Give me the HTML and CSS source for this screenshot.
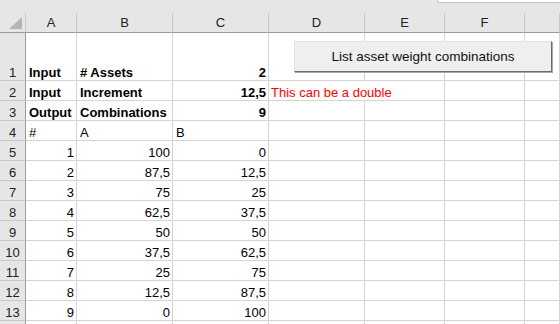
FILE: index.html
```html
<!DOCTYPE html>
<html lang="en">
<head>
    <meta charset="UTF-8">
    <title>Asset weight combinations</title>
    <link rel="stylesheet" href="styles.css">
</head>
<body>
    <div class="workbook">
        <div class="topbar">
            <div class="formula-edge"></div>
        </div>

        <div class="sheet">
            <!-- column headers -->
            <div class="ch corner">
                <svg width="13" height="12" viewBox="0 0 13 12"><polygon points="13,0 13,12 0,12" fill="#b5b5b5"/></svg>
            </div>
            <div class="ch">A</div>
            <div class="ch">B</div>
            <div class="ch">C</div>
            <div class="ch">D</div>
            <div class="ch">E</div>
            <div class="ch">F</div>
            <div class="ch"></div>

            <!-- row 1 -->
            <div class="rh">1</div>
            <div class="c b">Input</div>
            <div class="c b"># Assets</div>
            <div class="c b num">2</div>
            <div class="c"></div><div class="c"></div><div class="c"></div><div class="c"></div>

            <!-- row 2 -->
            <div class="rh">2</div>
            <div class="c b">Input</div>
            <div class="c b">Increment</div>
            <div class="c b num">12,5</div>
            <div class="c note">This can be a double</div>
            <div class="c"></div><div class="c"></div>

            <!-- row 3 -->
            <div class="rh">3</div>
            <div class="c b">Output</div>
            <div class="c b">Combinations</div>
            <div class="c b num">9</div>
            <div class="c"></div><div class="c"></div><div class="c"></div><div class="c"></div>

            <!-- row 4 -->
            <div class="rh">4</div>
            <div class="c">#</div>
            <div class="c">A</div>
            <div class="c">B</div>
            <div class="c"></div><div class="c"></div><div class="c"></div><div class="c"></div>

            <div class="rh">5</div>
            <div class="c num">1</div><div class="c num">100</div><div class="c num">0</div>
            <div class="c"></div><div class="c"></div><div class="c"></div><div class="c"></div>

            <div class="rh">6</div>
            <div class="c num">2</div><div class="c num">87,5</div><div class="c num">12,5</div>
            <div class="c"></div><div class="c"></div><div class="c"></div><div class="c"></div>

            <div class="rh">7</div>
            <div class="c num">3</div><div class="c num">75</div><div class="c num">25</div>
            <div class="c"></div><div class="c"></div><div class="c"></div><div class="c"></div>

            <div class="rh">8</div>
            <div class="c num">4</div><div class="c num">62,5</div><div class="c num">37,5</div>
            <div class="c"></div><div class="c"></div><div class="c"></div><div class="c"></div>

            <div class="rh">9</div>
            <div class="c num">5</div><div class="c num">50</div><div class="c num">50</div>
            <div class="c"></div><div class="c"></div><div class="c"></div><div class="c"></div>

            <div class="rh">10</div>
            <div class="c num">6</div><div class="c num">37,5</div><div class="c num">62,5</div>
            <div class="c"></div><div class="c"></div><div class="c"></div><div class="c"></div>

            <div class="rh">11</div>
            <div class="c num">7</div><div class="c num">25</div><div class="c num">75</div>
            <div class="c"></div><div class="c"></div><div class="c"></div><div class="c"></div>

            <div class="rh">12</div>
            <div class="c num">8</div><div class="c num">12,5</div><div class="c num">87,5</div>
            <div class="c"></div><div class="c"></div><div class="c"></div><div class="c"></div>

            <div class="rh">13</div>
            <div class="c num">9</div><div class="c num">0</div><div class="c num">100</div>
            <div class="c"></div><div class="c"></div><div class="c"></div><div class="c"></div>

            <!-- row 14, only its top edge is in view -->
            <div class="rh"></div>
            <div class="c"></div><div class="c"></div><div class="c"></div>
            <div class="c"></div><div class="c"></div><div class="c"></div><div class="c"></div>
        </div>

        <button class="macro-btn">List asset weight combinations</button>
    </div>
</body>
</html>
```

FILE: styles.css
```css
/* Base */
* {
    margin: 0;
    padding: 0;
    box-sizing: border-box;
}

body {
    font-family: 'Liberation Sans', Arial, sans-serif;
    font-size: 13px;
    color: #000;
    background: #fff;
    overflow: hidden;
}

.workbook {
    position: relative;
    width: 560px;
    height: 324px;
    overflow: hidden;
}

/* Strip above the column letters */
.topbar {
    height: 13px;
    background: #e6e6e6;
    display: flex;
    justify-content: flex-end;
}

.formula-edge {
    width: 123px;
    height: 3px;
    background: #fff;
    border-left: 1px solid #c6c6c6;
    border-bottom: 1px solid #c6c6c6;
}

/* Grid */
.sheet {
    display: grid;
    grid-template-columns: 26px 51px 96px 96px 96px 80px 80px 1fr;
    grid-template-rows: 20px 48px repeat(13, 20px);
}

.ch {
    background: #e6e6e6;
    border-right: 1px solid #c8c8c8;
    border-bottom: 1px solid #9b9b9b;
    display: flex;
    align-items: center;
    justify-content: center;
    color: #222;
    line-height: 15px;
}

.corner {
    justify-content: flex-end;
    align-items: flex-end;
    padding: 0 3px 3px 0;
}

.corner svg {
    display: block;
}

.rh {
    background: #e6e6e6;
    border-right: 1px solid #9b9b9b;
    border-bottom: 1px solid #c8c8c8;
    display: flex;
    align-items: flex-end;
    justify-content: center;
    color: #222;
    line-height: 15px;
}

.c {
    border-right: 1px solid #d4d4d4;
    border-bottom: 1px solid #d4d4d4;
    display: flex;
    align-items: flex-end;
    padding: 0 3px;
    line-height: 15px;
    white-space: nowrap;
    overflow: hidden;
}

.b {
    font-weight: bold;
}

.num {
    justify-content: flex-end;
    padding-right: 2px;
}

.note {
    grid-column: span 2;
    color: #ff0000;
    padding-left: 2px;
}

/* Macro button on top of the sheet */
.macro-btn {
    position: absolute;
    left: 294px;
    top: 41px;
    width: 258px;
    height: 31px;
    background: #efefef;
    border-top: 1px solid #e2e2e2;
    border-left: 1px solid #e2e2e2;
    border-right: 1px solid #6a6a6a;
    border-bottom: 1px solid #6a6a6a;
    box-shadow: 1px 1px 0 #a8a8a8;
    font-family: 'Liberation Sans', Arial, sans-serif;
    font-size: 13.5px;
    color: #111;
}
```
